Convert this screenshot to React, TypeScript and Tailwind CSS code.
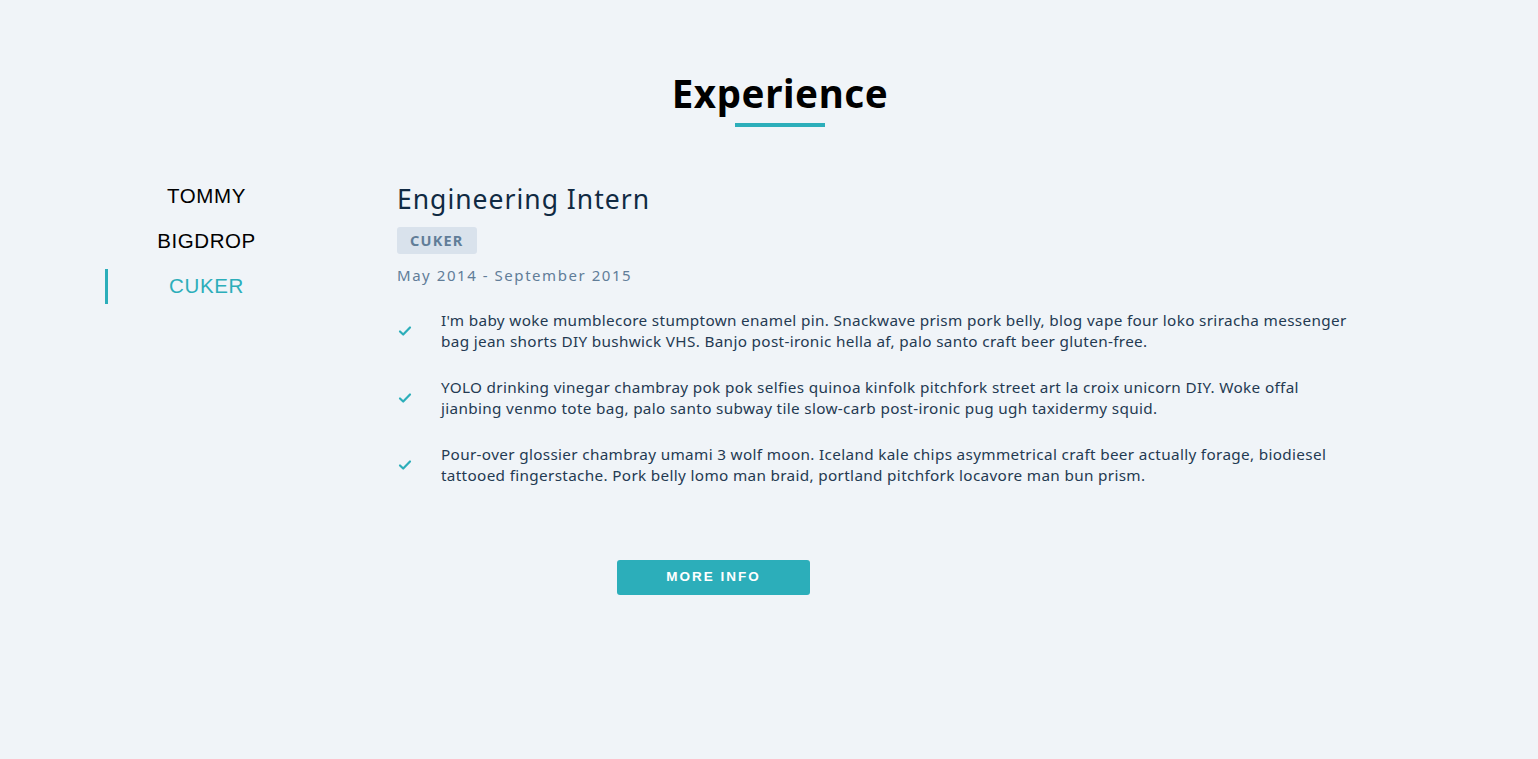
import { useState } from "react";

const jobs = [
    {
        company: "TOMMY",
        title: "Frontend Developer",
        dates: "June 2017 - Present",
    },
    {
        company: "BIGDROP",
        title: "Full Stack Developer",
        dates: "October 2015 - May 2017",
    },
    {
        company: "CUKER",
        title: "Engineering Intern",
        dates: "May 2014 - September 2015",
    },
];

const duties = [
    "I'm baby woke mumblecore stumptown enamel pin. Snackwave prism pork belly, blog vape four loko sriracha messenger bag jean shorts DIY bushwick VHS. Banjo post-ironic hella af, palo santo craft beer gluten-free.",
    "YOLO drinking vinegar chambray pok pok selfies quinoa kinfolk pitchfork street art la croix unicorn DIY. Woke offal jianbing venmo tote bag, palo santo subway tile slow-carb post-ironic pug ugh taxidermy squid.",
    "Pour-over glossier chambray umami 3 wolf moon. Iceland kale chips asymmetrical craft beer actually forage, biodiesel tattooed fingerstache. Pork belly lomo man braid, portland pitchfork locavore man bun prism.",
];

const CheckIcon = () => (
    <svg
        width="14"
        height="12"
        viewBox="0 0 14 12"
        fill="none"
        stroke="#2caeba"
        strokeWidth="2.2"
        strokeLinecap="round"
        strokeLinejoin="round"
    >
        <path d="M2 6.5 L5.2 9.5 L12 2.5" />
    </svg>
);

export default function App() {
    const [active, setActive] = useState(2);
    const job = jobs[active];

    return (
        <div
            className="min-h-screen bg-[#f0f4f8]"
            style={{ fontFamily: '"Noto Sans", sans-serif' }}
        >
            <section className="pt-[67px]">
                <div className="flex flex-col items-center pl-[22px]">
                    <h2 className="text-[38.5px] font-bold leading-[52px] tracking-[0.6px] text-black">
                        Experience
                    </h2>
                    <div className="mt-[4px] h-[4px] w-[90px] bg-[#2caeba]" />
                </div>

                <div className="mt-[51px] flex pl-[105px]">
                    <div className="flex w-[200px] flex-col pt-[1px] font-['Liberation_Sans',sans-serif]">
                        {jobs.map((item, i) => (
                            <button
                                key={item.company}
                                onClick={() => setActive(i)}
                                className={`mb-[10px] h-[35px] text-[20.5px] tracking-[0.6px] ${
                                    i === active
                                        ? "border-l-[3px] border-[#2caeba] text-[#2caeba]"
                                        : "border-l-[3px] border-transparent text-black"
                                }`}
                            >
                                {item.company}
                            </button>
                        ))}
                    </div>

                    <article className="ml-[92px] w-[960px]">
                        <h3 className="pt-[3px] text-[26.5px] leading-[36px] tracking-[1px] text-[#102a43]">
                            {job.title}
                        </h3>
                        <span className="mt-[10px] inline-block rounded-[3px] bg-[#d9e2ec] px-[13px] py-[3px] text-[14.5px] font-bold leading-[21px] tracking-[1.2px] text-[#617d98]">
                            {job.company}
                        </span>
                        <p className="mt-[10px] text-[15px] tracking-[1.55px] text-[#617d98]">
                            {job.dates}
                        </p>

                        <div className="mt-[23px] flex flex-col gap-[25px]">
                            {duties.map((text) => (
                                <div key={text} className="flex items-center">
                                    <div className="w-[44px] shrink-0 pl-[1px]">
                                        <CheckIcon />
                                    </div>
                                    <p className="w-[915px] text-[15.3px] leading-[21px] tracking-[0.33px] text-[#243a52]">
                                        {text}
                                    </p>
                                </div>
                            ))}
                        </div>
                    </article>
                </div>

                <div className="mt-[74px] flex pl-[617px]">
                    <button className="h-[35px] w-[193px] rounded-[3px] bg-[#2caeba] font-['Liberation_Sans',sans-serif] text-[13.5px] font-bold tracking-[2px] text-white">
                        MORE INFO
                    </button>
                </div>
            </section>
        </div>
    );
}
